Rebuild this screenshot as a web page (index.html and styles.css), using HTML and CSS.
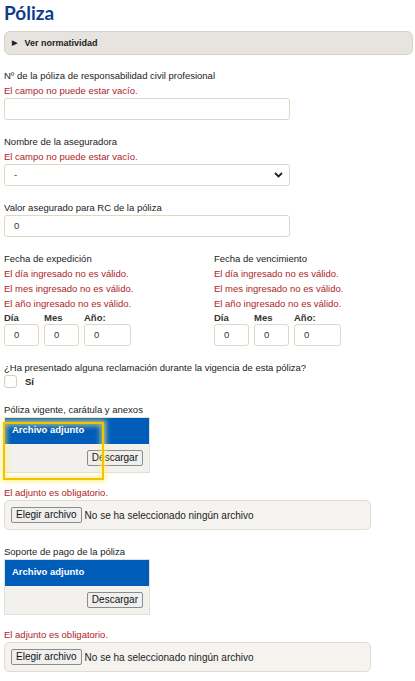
FILE: index.html
```html
<!DOCTYPE html>
<html lang="es">
<head>
<meta charset="utf-8">
<meta name="viewport" content="width=device-width, initial-scale=1.0">
<title>Póliza</title>
<link rel="stylesheet" href="styles.css">
</head>
<body>
<div class="page">
	<h1 class="title">Póliza</h1>

	<div class="norma"><span class="tri">&#9654;</span> Ver normatividad</div>

	<div class="field">
		<div class="lbl">Nº de la póliza de responsabilidad civil profesional</div>
		<div class="err">El campo no puede estar vacío.</div>
		<div class="inp"></div>
	</div>

	<div class="field">
		<div class="lbl">Nombre de la aseguradora</div>
		<div class="err">El campo no puede estar vacío.</div>
		<div class="inp sel">-
			<svg class="chev" width="9" height="6" viewBox="0 0 9 6"><path d="M1 1 L4.5 4.5 L8 1" fill="none" stroke="#222" stroke-width="1.8"/></svg>
		</div>
	</div>

	<div class="field">
		<div class="lbl">Valor asegurado para RC de la póliza</div>
		<div class="inp">0</div>
	</div>

	<div class="field dates">
		<div class="date-col">
			<div class="lbl">Fecha de expedición</div>
			<div class="err">El día ingresado no es válido.</div>
			<div class="err">El mes ingresado no es válido.</div>
			<div class="err">El año ingresado no es válido.</div>
			<div class="dmy">
				<div class="part"><div class="sub">Día</div><div class="inp small">0</div></div>
				<div class="part"><div class="sub">Mes</div><div class="inp small">0</div></div>
				<div class="part"><div class="sub">Año:</div><div class="inp year">0</div></div>
			</div>
		</div>
		<div class="date-col">
			<div class="lbl">Fecha de vencimiento</div>
			<div class="err">El día ingresado no es válido.</div>
			<div class="err">El mes ingresado no es válido.</div>
			<div class="err">El año ingresado no es válido.</div>
			<div class="dmy">
				<div class="part"><div class="sub">Día</div><div class="inp small">0</div></div>
				<div class="part"><div class="sub">Mes</div><div class="inp small">0</div></div>
				<div class="part"><div class="sub">Año:</div><div class="inp year">0</div></div>
			</div>
		</div>
	</div>

	<div class="field">
		<div class="lbl">¿Ha presentado alguna reclamación durante la vigencia de esta póliza?</div>
		<div class="check"><span class="box"></span> Sí</div>
	</div>

	<div class="field attach-field">
		<div class="lbl">Póliza vigente, carátula y anexos</div>
		<div class="attach">
			<div class="attach-head">Archivo adjunto</div>
			<div class="attach-body"><span class="btn">Descargar</span></div>
			<div class="mark"></div>
		</div>
	</div>

	<div class="field">
		<div class="err">El adjunto es obligatorio.</div>
		<div class="file"><span class="btn">Elegir archivo</span> No se ha seleccionado ningún archivo</div>
	</div>

	<div class="field attach-field">
		<div class="lbl">Soporte de pago de la póliza</div>
		<div class="attach">
			<div class="attach-head">Archivo adjunto</div>
			<div class="attach-body"><span class="btn">Descargar</span></div>
		</div>
	</div>

	<div class="field">
		<div class="err">El adjunto es obligatorio.</div>
		<div class="file"><span class="btn">Elegir archivo</span> No se ha seleccionado ningún archivo</div>
	</div>
</div>
</body>
</html>
```

FILE: styles.css
```css
body{
margin:0;
background:#fff;
color:#222;
font-family:"Liberation Sans",Arial,sans-serif;
font-size:9.5px;
}
.page{
padding:0 2px 0 4px;
}
.title{
margin:0;
padding-top:2px;
height:29px;
font-family:Lato,"Liberation Sans",sans-serif;
font-size:19px;
font-weight:bold;
color:#0d3d8e;
line-height:22px;
}
.norma{
height:22px;
line-height:22px;
background:#e7e4df;
border:1px solid #d6d1c9;
border-radius:6px;
font-weight:bold;
font-size:9px;
color:#222;
padding-left:7px;
margin-bottom:13px;
}
.tri{
font-size:7px;
margin-right:5px;
vertical-align:1px;
}
.field{
margin-bottom:14px;
}
.lbl,.err{
line-height:15px;
}
.lbl{
color:#222;
}
.err{
color:#ad1e27;
}
.inp{
box-sizing:border-box;
width:286px;
height:22px;
border:1px solid #e0d7c4;
border-radius:3px;
line-height:20px;
padding-left:9px;
color:#333;
background:#fff;
}
.sel{
display:flex;
justify-content:space-between;
align-items:center;
padding-right:6px;
}
.dates{
display:flex;
}
.date-col{
width:210px;
flex-shrink:0;
}
.date-col + .date-col{
width:auto;
flex-shrink:1;
}
.dmy{
display:flex;
gap:5px;
}
.sub{
line-height:13px;
font-weight:bold;
color:#333;
}
.inp.small{
width:35px;
}
.inp.year{
width:47px;
}
.check{
display:flex;
align-items:center;
line-height:13px;
font-weight:bold;
}
.box{
display:inline-block;
width:11px;
height:11px;
border:1px solid #d6cdbb;
border-radius:3px;
margin-right:8px;
}
.attach-field{
margin-bottom:12px;
}
.attach{
position:relative;
width:144px;
border:1px solid #e2ded8;
}
.attach-head{
height:26px;
line-height:24px;
background:#005cb9;
color:#fff;
font-weight:bold;
padding-left:7px;
}
.attach-body{
height:28px;
background:#f3f1ed;
display:flex;
justify-content:flex-end;
align-items:center;
padding-right:6px;
}
.btn{
display:inline-block;
border:1px solid #8c8c8c;
border-radius:2px;
background:#efefef;
color:#111;
font-size:10px;
padding:1px 4px;
line-height:12px;
}
.mark{
position:absolute;
left:-2px;
top:4px;
width:97px;
height:54px;
border:2px solid #f5c200;
box-shadow:0 0 5px 2px rgba(255,240,120,0.7),inset 0 0 5px 2px rgba(255,240,120,0.6);
}
.file{
box-sizing:border-box;
width:367px;
height:30px;
border:1px solid #e3dccc;
border-radius:5px;
background:#f5f3ef;
display:flex;
align-items:center;
padding-left:6px;
gap:3px;
font-size:10px;
color:#222;
}
```
